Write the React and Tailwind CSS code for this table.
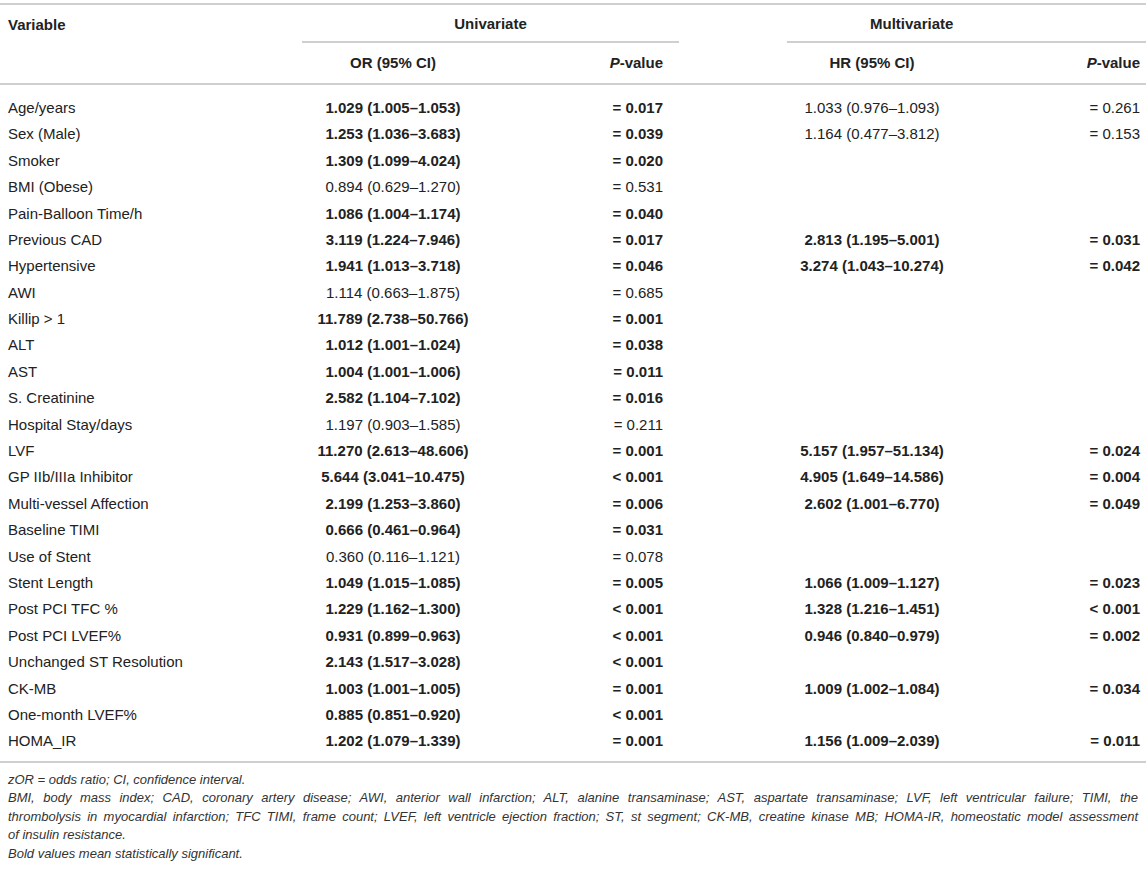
const rows = [
  ['Age/years', '1.029 (1.005–1.053)', '= 0.017', true, '1.033 (0.976–1.093)', '= 0.261', false],
  ['Sex (Male)', '1.253 (1.036–3.683)', '= 0.039', true, '1.164 (0.477–3.812)', '= 0.153', false],
  ['Smoker', '1.309 (1.099–4.024)', '= 0.020', true],
  ['BMI (Obese)', '0.894 (0.629–1.270)', '= 0.531', false],
  ['Pain-Balloon Time/h', '1.086 (1.004–1.174)', '= 0.040', true],
  ['Previous CAD', '3.119 (1.224–7.946)', '= 0.017', true, '2.813 (1.195–5.001)', '= 0.031', true],
  ['Hypertensive', '1.941 (1.013–3.718)', '= 0.046', true, '3.274 (1.043–10.274)', '= 0.042', true],
  ['AWI', '1.114 (0.663–1.875)', '= 0.685', false],
  ['Killip > 1', '11.789 (2.738–50.766)', '= 0.001', true],
  ['ALT', '1.012 (1.001–1.024)', '= 0.038', true],
  ['AST', '1.004 (1.001–1.006)', '= 0.011', true],
  ['S. Creatinine', '2.582 (1.104–7.102)', '= 0.016', true],
  ['Hospital Stay/days', '1.197 (0.903–1.585)', '= 0.211', false],
  ['LVF', '11.270 (2.613–48.606)', '= 0.001', true, '5.157 (1.957–51.134)', '= 0.024', true],
  ['GP IIb/IIIa Inhibitor', '5.644 (3.041–10.475)', '< 0.001', true, '4.905 (1.649–14.586)', '= 0.004', true],
  ['Multi-vessel Affection', '2.199 (1.253–3.860)', '= 0.006', true, '2.602 (1.001–6.770)', '= 0.049', true],
  ['Baseline TIMI', '0.666 (0.461–0.964)', '= 0.031', true],
  ['Use of Stent', '0.360 (0.116–1.121)', '= 0.078', false],
  ['Stent Length', '1.049 (1.015–1.085)', '= 0.005', true, '1.066 (1.009–1.127)', '= 0.023', true],
  ['Post PCI TFC %', '1.229 (1.162–1.300)', '< 0.001', true, '1.328 (1.216–1.451)', '< 0.001', true],
  ['Post PCI LVEF%', '0.931 (0.899–0.963)', '< 0.001', true, '0.946 (0.840–0.979)', '= 0.002', true],
  ['Unchanged ST Resolution', '2.143 (1.517–3.028)', '< 0.001', true],
  ['CK-MB', '1.003 (1.001–1.005)', '= 0.001', true, '1.009 (1.002–1.084)', '= 0.034', true],
  ['One-month LVEF%', '0.885 (0.851–0.920)', '< 0.001', true],
  ['HOMA_IR', '1.202 (1.079–1.339)', '= 0.001', true, '1.156 (1.009–2.039)', '= 0.011', true],
]

const cols = 'grid grid-cols-[302px_182px_195px_108px_170px_189px]'

function PValue() {
  return (
    <span>
      <i>P</i>-value
    </span>
  )
}

export default function App() {
  return (
    <div className="w-[1146px] bg-white pt-[3px] font-['Liberation_Sans',Arial,sans-serif] text-[15px] text-[#222]">
      <div className="h-[2px] bg-[#cfcfcf]" />

      {/* header */}
      <div className={`${cols} h-[38px] font-bold`}>
        <div className="flex items-center pl-2 pt-[2px]">Variable</div>
        <div className="col-span-2 flex flex-col">
          <div className="flex flex-1 items-center justify-center pt-[2px]">Univariate</div>
          <div className="h-[2px] bg-[#cfcfcf]" />
        </div>
        <div />
        <div className="col-span-2 flex flex-col">
          <div className="flex flex-1 items-center pt-[2px] pl-[83px]">Multivariate</div>
          <div className="h-[2px] bg-[#cfcfcf]" />
        </div>
      </div>
      <div className={`${cols} h-[40px] items-center font-bold`}>
        <div />
        <div className="text-center">OR (95% CI)</div>
        <div className="pr-4 text-right">
          <PValue />
        </div>
        <div />
        <div className="text-center">HR (95% CI)</div>
        <div className="pr-1.5 text-right">
          <PValue />
        </div>
      </div>
      <div className="h-[2px] bg-[#cfcfcf]" />

      {/* body */}
      <div className="pt-[10px] pb-[6px]">
        {rows.map(([name, or, p, ub, hr, p2, mb]) => (
          <div key={name} className={`${cols} h-[26.4px] items-center`}>
            <div className="pl-2">{name}</div>
            <div className={`text-center ${ub ? 'font-bold' : ''}`}>{or}</div>
            <div className={`pr-4 text-right ${ub ? 'font-bold' : ''}`}>{p}</div>
            <div />
            <div className={`text-center ${mb ? 'font-bold' : ''}`}>{hr}</div>
            <div className={`pr-1.5 text-right ${mb ? 'font-bold' : ''}`}>{p2}</div>
          </div>
        ))}
      </div>
      <div className="h-[2px] bg-[#cfcfcf]" />

      {/* footnotes */}
      <div className="px-2 pt-[8px] text-[13px] leading-[18.5px] italic text-[#333]">
        <div>zOR = odds ratio; CI, confidence interval.</div>
        <div className="text-justify [text-align-last:justify]">
          BMI, body mass index; CAD, coronary artery disease; AWI, anterior wall infarction; ALT, alanine transaminase; AST, aspartate transaminase; LVF, left ventricular failure; TIMI, the
        </div>
        <div className="text-justify [text-align-last:justify]">
          thrombolysis in myocardial infarction; TFC TIMI, frame count; LVEF, left ventricle ejection fraction; ST, st segment; CK-MB, creatine kinase MB; HOMA-IR, homeostatic model assessment
        </div>
        <div>of insulin resistance.</div>
        <div>Bold values mean statistically significant.</div>
      </div>
    </div>
  )
}
